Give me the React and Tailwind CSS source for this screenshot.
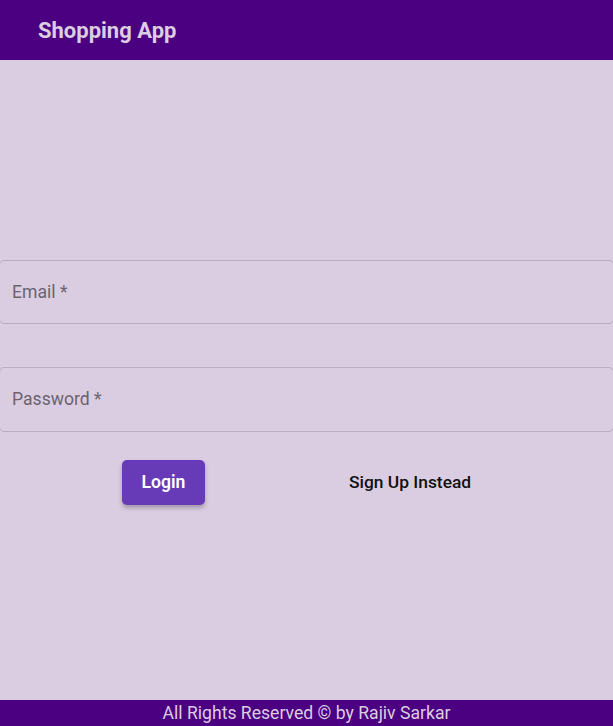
export default function App() {
  return (
    <div className="flex min-h-screen flex-col bg-[#dacde1] font-['Roboto',sans-serif]">
      <header className="flex h-[60px] shrink-0 items-center bg-[#4b0082] px-[38px]">
        <h1 className="text-[22px] font-bold text-[#dccde3]">Shopping App</h1>
      </header>

      <main className="flex flex-1 flex-col justify-center pt-[4px]">
        <div className="-mx-px">
          <div className="flex h-[64px] items-center rounded-[5px] border border-[#b9adc0] px-[12px] pt-[1px]">
            <span className="text-[17.6px] text-[#6a6470]">Email *</span>
          </div>
          <div className="mt-[43px] flex h-[65px] items-center rounded-[5px] border border-[#b9adc0] px-[12px] pt-[1px]">
            <span className="text-[17.6px] text-[#6a6470]">Password *</span>
          </div>
        </div>

        <div className="mt-[28px] flex items-center">
          <button className="ml-[122px] h-[45px] w-[83px] rounded-[5px] bg-[#673ab7] text-[17.6px] font-semibold text-white shadow-[0_3px_4px_rgba(0,0,0,0.25)]">
            Login
          </button>
          <button className="ml-[144px] text-[17.4px] font-medium text-[#111]">Sign Up Instead</button>
        </div>
      </main>

      <footer className="flex h-[26px] shrink-0 items-center justify-center bg-[#4b0082]">
        <p className="pt-[2px] text-[17.6px] leading-none text-[#dccde3]">All Rights Reserved © by Rajiv Sarkar</p>
      </footer>
    </div>
  )
}
